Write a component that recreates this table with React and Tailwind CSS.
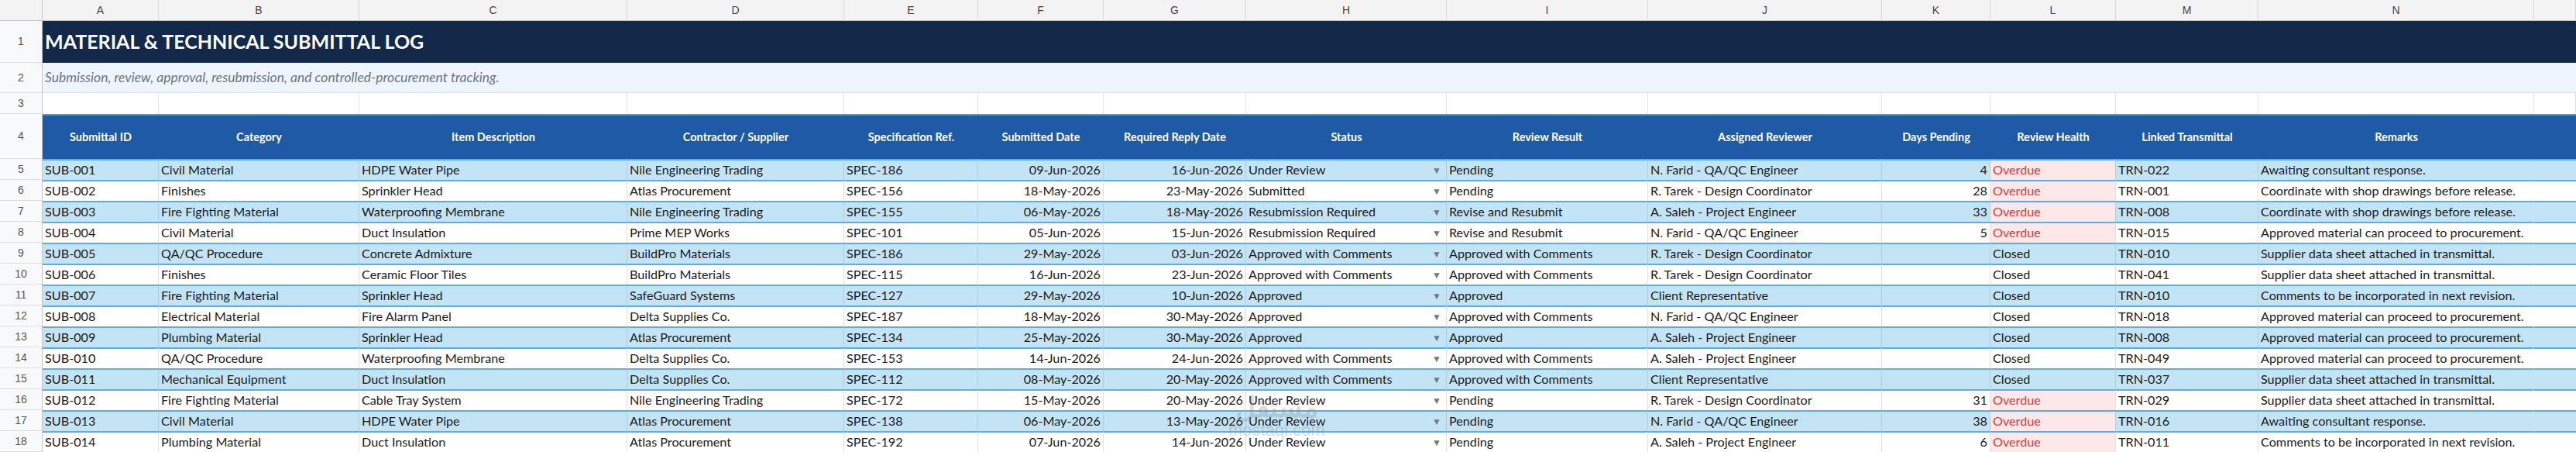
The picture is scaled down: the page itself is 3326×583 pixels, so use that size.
import React from "react";

const COLS =
  "grid grid-cols-[55px_150px_259px_346px_280px_173px_162px_184px_259px_260px_302px_140px_162px_184px_356px_1fr]";
const DATA_COLS =
  "grid grid-cols-[150px_259px_346px_280px_173px_162px_184px_259px_260px_302px_140px_162px_184px_356px_1fr]";

const letters = ["A", "B", "C", "D", "E", "F", "G", "H", "I", "J", "K", "L", "M", "N", ""];

const headers = [
  "Submittal ID",
  "Category",
  "Item Description",
  "Contractor / Supplier",
  "Specification Ref.",
  "Submitted Date",
  "Required Reply Date",
  "Status",
  "Review Result",
  "Assigned Reviewer",
  "Days Pending",
  "Review Health",
  "Linked Transmittal",
  "Remarks",
  "",
];

const rows = [
  ["SUB-001", "Civil Material", "HDPE Water Pipe", "Nile Engineering Trading", "SPEC-186", "09-Jun-2026", "16-Jun-2026", "Under Review", "Pending", "N. Farid - QA/QC Engineer", "4", "Overdue", "TRN-022", "Awaiting consultant response."],
  ["SUB-002", "Finishes", "Sprinkler Head", "Atlas Procurement", "SPEC-156", "18-May-2026", "23-May-2026", "Submitted", "Pending", "R. Tarek - Design Coordinator", "28", "Overdue", "TRN-001", "Coordinate with shop drawings before release."],
  ["SUB-003", "Fire Fighting Material", "Waterproofing Membrane", "Nile Engineering Trading", "SPEC-155", "06-May-2026", "18-May-2026", "Resubmission Required", "Revise and Resubmit", "A. Saleh - Project Engineer", "33", "Overdue", "TRN-008", "Coordinate with shop drawings before release."],
  ["SUB-004", "Civil Material", "Duct Insulation", "Prime MEP Works", "SPEC-101", "05-Jun-2026", "15-Jun-2026", "Resubmission Required", "Revise and Resubmit", "N. Farid - QA/QC Engineer", "5", "Overdue", "TRN-015", "Approved material can proceed to procurement."],
  ["SUB-005", "QA/QC Procedure", "Concrete Admixture", "BuildPro Materials", "SPEC-186", "29-May-2026", "03-Jun-2026", "Approved with Comments", "Approved with Comments", "R. Tarek - Design Coordinator", "", "Closed", "TRN-010", "Supplier data sheet attached in transmittal."],
  ["SUB-006", "Finishes", "Ceramic Floor Tiles", "BuildPro Materials", "SPEC-115", "16-Jun-2026", "23-Jun-2026", "Approved with Comments", "Approved with Comments", "R. Tarek - Design Coordinator", "", "Closed", "TRN-041", "Supplier data sheet attached in transmittal."],
  ["SUB-007", "Fire Fighting Material", "Sprinkler Head", "SafeGuard Systems", "SPEC-127", "29-May-2026", "10-Jun-2026", "Approved", "Approved", "Client Representative", "", "Closed", "TRN-010", "Comments to be incorporated in next revision."],
  ["SUB-008", "Electrical Material", "Fire Alarm Panel", "Delta Supplies Co.", "SPEC-187", "18-May-2026", "30-May-2026", "Approved", "Approved with Comments", "N. Farid - QA/QC Engineer", "", "Closed", "TRN-018", "Approved material can proceed to procurement."],
  ["SUB-009", "Plumbing Material", "Sprinkler Head", "Atlas Procurement", "SPEC-134", "25-May-2026", "30-May-2026", "Approved", "Approved", "A. Saleh - Project Engineer", "", "Closed", "TRN-008", "Approved material can proceed to procurement."],
  ["SUB-010", "QA/QC Procedure", "Waterproofing Membrane", "Delta Supplies Co.", "SPEC-153", "14-Jun-2026", "24-Jun-2026", "Approved with Comments", "Approved with Comments", "A. Saleh - Project Engineer", "", "Closed", "TRN-049", "Approved material can proceed to procurement."],
  ["SUB-011", "Mechanical Equipment", "Duct Insulation", "Delta Supplies Co.", "SPEC-112", "08-May-2026", "20-May-2026", "Approved with Comments", "Approved with Comments", "Client Representative", "", "Closed", "TRN-037", "Supplier data sheet attached in transmittal."],
  ["SUB-012", "Fire Fighting Material", "Cable Tray System", "Nile Engineering Trading", "SPEC-172", "15-May-2026", "20-May-2026", "Under Review", "Pending", "R. Tarek - Design Coordinator", "31", "Overdue", "TRN-029", "Supplier data sheet attached in transmittal."],
  ["SUB-013", "Civil Material", "HDPE Water Pipe", "Atlas Procurement", "SPEC-138", "06-May-2026", "13-May-2026", "Under Review", "Pending", "N. Farid - QA/QC Engineer", "38", "Overdue", "TRN-016", "Awaiting consultant response."],
  ["SUB-014", "Plumbing Material", "Duct Insulation", "Atlas Procurement", "SPEC-192", "07-Jun-2026", "14-Jun-2026", "Under Review", "Pending", "A. Saleh - Project Engineer", "6", "Overdue", "TRN-011", "Comments to be incorporated in next revision."],
];

function RowNum({ n }) {
  return (
    <div className="flex items-center justify-center bg-[#f8f9fa] border-r border-b border-r-[#c4c4c4] border-b-[#dedede] font-['Liberation_Sans',Arial,sans-serif] text-[14px] text-[#555]">
      {n}
    </div>
  );
}

function DataCell({ idx, value, blue }) {
  const line = blue ? "border-r-[#a9d0e8]" : "border-r-[#e1e1e1]";
  const base = `h-full border-t-2 border-t-[#5aaee3] border-r ${line} px-[3px] flex items-center whitespace-nowrap`;

  // dates + days pending sit right
  if (idx === 5 || idx === 6 || idx === 10) {
    return <div className={`${base} justify-end`}>{value}</div>;
  }
  if (idx === 7) {
    return (
      <div className={`${base} justify-between pr-[6px]`}>
        <span>{value}</span>
        <span className="text-[12px] text-[#777]">▼</span>
      </div>
    );
  }
  if (idx === 11) {
    const overdue = value === "Overdue";
    return (
      <div className={`${base} ${overdue ? "bg-[#fce8e8] text-[#d93a3a]" : ""}`}>
        {value}
      </div>
    );
  }
  if (idx === 13) {
    return <div className={`${base} overflow-visible border-r-transparent`}>{value}</div>;
  }
  return <div className={base}>{value}</div>;
}

export default function App() {
  return (
    <div className="relative w-full h-[583px] overflow-hidden bg-white font-[Lato,sans-serif] text-[#1b1b1b]">
      {/* column letters */}
      <div className={`${COLS} h-[27px] bg-[#f3f3f3] font-['Liberation_Sans',Arial,sans-serif] text-[14px] text-[#444]`}>
        <div className="border-r border-b border-[#c8c8c8]" />
        {letters.map((l, i) => (
          <div key={i} className="flex items-center justify-center border-r border-b border-r-[#d6d6d6] border-b-[#c8c8c8]">
            {l}
          </div>
        ))}
      </div>

      {/* title */}
      <div className={`${COLS} h-[54px]`}>
        <RowNum n="1" />
        <div className="col-span-15 bg-[#12294a] flex items-center px-[3px]">
          <h1 className="text-[25px] font-bold text-white">MATERIAL &amp; TECHNICAL SUBMITTAL LOG</h1>
        </div>
      </div>

      {/* subtitle */}
      <div className={`${COLS} h-[39px]`}>
        <RowNum n="2" />
        <div className="col-span-15 bg-[#eef5fe] border-b border-[#dcdfe3] flex items-center px-[3px]">
          <p className="text-[17.5px] italic text-[#6b7584]">
            Submission, review, approval, resubmission, and controlled-procurement tracking.
          </p>
        </div>
      </div>

      {/* empty row */}
      <div className={`${COLS} h-[27px]`}>
        <RowNum n="3" />
        {letters.map((_, i) => (
          <div key={i} className="border-r border-[#e3e3e3]" />
        ))}
      </div>

      {/* header */}
      <div className={`${COLS} h-[58px]`}>
        <RowNum n="4" />
        {headers.map((h, i) => (
          <div
            key={i}
            className="bg-[#1f5aa6] border-t-2 border-[#4a9ad8] flex items-center justify-center text-white text-[14.5px] font-bold whitespace-nowrap"
          >
            {h}
          </div>
        ))}
      </div>

      {/* data rows */}
      {rows.map((r, ri) => {
        const blue = ri % 2 === 0;
        return (
          <div key={ri} className={`${COLS} h-[27px] text-[16.2px]`}>
            <RowNum n={ri + 5} />
            <div className={`col-span-15 ${DATA_COLS} ${blue ? "bg-[#c3e4f5]" : "bg-white"}`}>
              {r.map((v, i) => (
                <DataCell key={i} idx={i} value={v} blue={blue} />
              ))}
              <div className="h-full border-t-2 border-t-[#5aaee3]" />
            </div>
          </div>
        );
      })}

      {/* watermark */}
      <div className="pointer-events-none absolute left-[1586px] top-[506px] flex flex-col items-center text-[#8c8c8c] opacity-30">
        <span className="text-[36px] leading-[38px] font-bold font-['Noto_Sans',sans-serif]">مستقل</span>
        <span className="text-[22px] leading-[22px] font-['Liberation_Sans',Arial,sans-serif]">mostaql.com</span>
      </div>
    </div>
  );
}
